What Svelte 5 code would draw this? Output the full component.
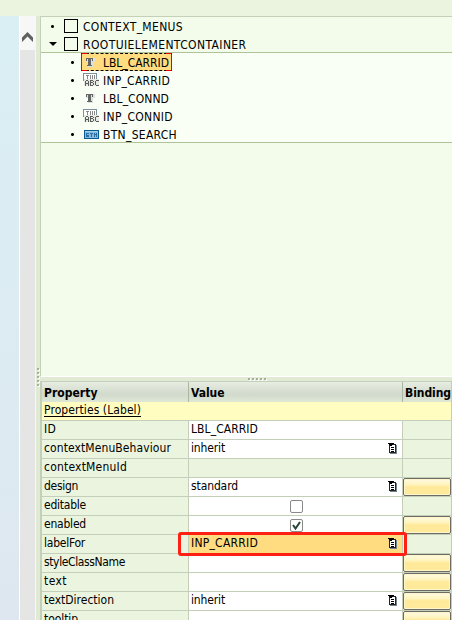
<script>
  const tree = [
    { name: 'LBL_CARRID', kind: 'label', w: 66, selected: true },
    { name: 'INP_CARRID', kind: 'input', w: 67 },
    { name: 'LBL_CONND', kind: 'label', w: 66 },
    { name: 'INP_CONNID', kind: 'input', w: 70 },
    { name: 'BTN_SEARCH', kind: 'button', w: 74 }
  ];
  const rows = [
    { name: 'ID', w: 12, value: 'LBL_CARRID', vw: 67 },
    { name: 'contextMenuBehaviour', w: 127, value: 'inherit', vw: 34, list: true },
    { name: 'contextMenuId', w: 83, disabled: true },
    { name: 'design', w: 34, value: 'standard', vw: 47, list: true, bind: true },
    { name: 'editable', w: 42, check: 'off' },
    { name: 'enabled', w: 42, check: 'on', bind: true },
    { name: 'labelFor', w: 41, value: 'INP_CARRID', vw: 67, list: true, selected: true },
    { name: 'styleClassName', w: 81, bind: true },
    { name: 'text', w: 23, bind: true },
    { name: 'textDirection', w: 70, value: 'inherit', vw: 34, list: true, bind: true },
    { name: 'tooltip', w: 34, bind: true }
  ];
  // Spreads the letters so that a label takes a set width.
  function fit(node, width) {
    const spacing = (width - node.getBoundingClientRect().width) / node.textContent.length;
    node.style.letterSpacing = `${spacing}px`;
  }
</script>

{#snippet icon(kind)}
  {#if kind === 'label'}
    <svg class="icon" width="17" height="16" viewBox="0 0 17 16" shape-rendering="crispEdges">
      <path fill="#dde2dc" d="M3 4h9v4h-2v5H5V8H3z" />
      <path fill="#666" d="M3 4h7v3H9V5H8v6h1v1H4v-1h1V5H4v2H3z" />
    </svg>
  {:else if kind === 'input'}
    <svg class="icon" width="17" height="16" viewBox="0 0 17 16" shape-rendering="crispEdges">
      <path fill="#fff" stroke="#7b8f9c" d="M.5 1.500h13v7H.5z" />
      <path fill="#888" d="M3 3h3v1H5v3H4V4H3zM7 3h1v4H7zM9 3h1v4H9zM11 3h1v4h-1z" />
      <path fill="#e6eae4" d="M1 7h15v7H1z" />
      <path fill="#5c5c5c" d="M3 8h2v1h1v5H5v-2H3v2H2V9h1zM3 9v2h2V9zM7 8h3v1h1v1h-1v1h1v2h-1v1H7zM8 9v1h2V9zM8 11v2h2v-2zM13 8h3v1h-3v4h3v1h-3v-1h-1V9h1z" />
    </svg>
  {:else}
    <svg class="icon" width="17" height="16" viewBox="0 0 17 16" shape-rendering="crispEdges">
      <path fill="#84bbdf" stroke="#075b91" d="M1.500 4.500h14v8h-14z" />
      <path fill="#a5cfe9" d="M2 5h13v1H2z" />
      <path fill="#2c6ea4" d="M3 7h3v1H4v1h2v2H3zM7 7h3v1H9v3H8V8H7zM11 7h1v1h1V7h1v4h-1V9h-1v2h-1z" />
    </svg>
  {/if}
{/snippet}

<div class="window">
  <div class="top"></div>
  <div class="main">
    <div class="canvas"></div>
    <div class="scroll">
      <svg width="15" height="34" viewBox="0 0 15 34"><path d="M2 26v-4.500l5.500-5.500 5.500 5.500V26l-5.500-5.500z" fill="#606060" /></svg>
    </div>
    <div class="splitv">{#each [0, 1, 2, 3, 4] as _}<i></i>{/each}</div>
    <div class="right">
      <div class="tree">
        <div class="node"><b class="dot"></b><span class="box"></span><span use:fit={100}>CONTEXT_MENUS</span></div>
        <div class="node root"><b class="arrow"></b><span class="box"></span><span use:fit={163.5}>ROOTUIELEMENTCONTAINER</span></div>
        <div class="children">
          {#each tree as t}
            <div class="node child">
              <b class="dot"></b>
              <div class="item" class:chosen={t.selected}>{@render icon(t.kind)}<span use:fit={t.w}>{t.name}</span></div>
            </div>
          {/each}
        </div>
      </div>
      <div class="splith">{#each [0, 1, 2, 3, 4] as _}<i></i>{/each}</div>
      <div class="table">
        <div class="head"><div class="prop"><span use:fit={53.5}>Property</span></div><div class="val"><span use:fit={33.5}>Value</span></div><div class="bind"><span use:fit={46}>Binding</span></div></div>
        <div class="group"><span use:fit={97}>Properties (Label)</span></div>
        {#each rows as r}
          <div class="row">
            <div class="prop"><span use:fit={r.w}>{r.name}</span></div>
            <div class="val" class:disabled={r.disabled} class:active={r.selected}>
              {#if r.value}<span use:fit={r.vw}>{r.value}</span>{/if}
              {#if r.check}
                <div class="check">{#if r.check === 'on'}<svg width="11" height="11" viewBox="0 0 11 11"><path d="M2 5l2.500 3.500L9 2" fill="none" stroke="#294536" stroke-width="2" /></svg>{/if}</div>
              {/if}
              {#if r.list}
                <svg class="list" width="10" height="12" viewBox="0 0 10 12" shape-rendering="crispEdges">
                  <path fill="#72858e" d="M2 2h7v9H2z" /><path fill="#222" d="M1 1h7v9H1z" /><path fill="#fff" d="M2 2h5v7H2z" />
                  <path fill="#000" d="M0 0h6v1H5v1H4v1H2V2H1V1H0zM3 4h3v1H3zM3 6h3v1H3zM3 8h3v1H3z" />
                </svg>
              {/if}
            </div>
            <div class="bind">{#if r.bind}<div class="btn"></div>{/if}</div>
          </div>
        {/each}
      </div>
    </div>
  </div>
  <div class="marker"></div>
</div>

<style>
  .window, .window * { box-sizing: border-box; }
  .window { position: relative; width: 452px; height: 620px; overflow: hidden; background: #ebf4df; color: #000; font: 12px/18px "DejaVu Sans Condensed", "DejaVu Sans", sans-serif; }
  span { white-space: nowrap; flex: none; }
  .top { height: 16px; }
  .main { display: flex; height: 604px; }
  .canvas { width: 20px; border-right: 1px solid #fff; background: linear-gradient(#daeff3, #dcecf2 50%, #dee7ef); }
  .scroll { width: 15px; background: #e5e5e5; }
  .scroll svg { display: block; background: #f7f7f7; }
  .splitv { width: 5px; border-left: 1px solid #f5f9ef; background: #e0ead5; padding: 352px 0 0 1px; display: flex; flex-direction: column; gap: 2px; }
  .splitv i, .splith i { width: 2px; height: 2px; background: #a4b097; box-shadow: 1px 1px #fff; flex: none; }
  .right { width: 412px; }
  .tree { height: 361px; border: 1px solid #c5d0b8; border-right: 0; border-bottom-color: #fff; background: #f3fbea; }
  .node { display: flex; height: 18px; align-items: center; padding-left: 10px; line-height: 18px; }
  .node span:not(.box) { padding-top: 2px; }
  .root { border-bottom: 1px solid #afc399; }
  .dot { width: 3px; height: 3px; background: radial-gradient(#000 45%, #999); margin-right: 10px; flex: none; border-radius: 1px; }
  .arrow { border: 4px solid transparent; border-top-color: #000; border-bottom: 0; width: 8px; height: 4px; margin: 0 7px 0 -2px; }
  .box { width: 14px; height: 14px; border: 1px solid #000; margin-right: 5px; }
  .children { height: 90px; background: #f9fff5; border-bottom: 1px solid #afc399; }
  .child { padding-left: 30px; }
  .child .dot { margin-right: 7px; }
  .item { display: flex; align-items: center; height: 18px; width: 91px; padding-left: 2px; }
  .item span { margin-left: 3px; }
  .icon { flex: none; }
  .chosen { position: relative; background: #ffdc80; border: 1px dashed #000; border-left: 1px solid #f00000; border-right: 1px solid #f00000; padding-left: 1px; }
  .chosen::before, .chosen::after { content: ''; position: absolute; top: -1px; bottom: -1px; width: 5px; border: solid #e00; border-width: 1px 0; }
  .chosen::before { left: 0; }
  .chosen::after { right: 0; }
  .splith { height: 4px; background: #e0ead5; display: flex; gap: 2px; padding: 1px 0 0 208px; }
  .table { width: 412px; border: solid #c3cfb8; border-width: 1px 1px 0 2px; height: 239px; overflow: hidden; }
  .head { display: flex; height: 20px; background: linear-gradient(#e7eee1, #d5dcd0 50%, #d2dacc 65%, #dfe7d7); font-weight: bold; line-height: 22px; }
  .head div { border-right: 1px solid #a9b6a0; }
  .head .bind { border: 0; }
  .head .bind span { margin-left: 2px; }
  .group { height: 19px; border-bottom: 1px solid #c3cfb8; background: #fffec0; padding-left: 2px; line-height: 17px; }
  .group span { text-decoration: underline; text-underline-offset: 2px; text-decoration-thickness: 1px; }
  .row { display: flex; height: 19px; line-height: 17px; }
  .row > div { border-bottom: 1px solid #c3cfb8; }
  .prop { width: 147px; padding-left: 2px; border-right: 1px solid #c3cfb8; }
  .val { display: flex; width: 214px; padding-left: 2px; border-right: 1px solid #c3cfb8; }
  .row .val { background: #fff; }
  .row .disabled { background: #ebf4df; }
  .row .active { background: #ffdc80; }
  .list { margin: 3px 4px 0 auto; }
  .check { width: 13px; height: 13px; border: 1px solid #898989; border-radius: 2px; background: #fff; margin: 3px 0 0 99px; }
  .check svg { display: block; }
  .bind { width: 48px; flex: none; }
  .btn { width: 48px; height: 18px; border: 1px solid #6c6c65; border-radius: 2px; background: linear-gradient(#fffbe5, #fff4bd 35%, #ffe999 50%, #ffea9d); box-shadow: inset 0 0 0 1px #fff5cc; }
  .marker { position: absolute; left: 178px; top: 532px; width: 229px; height: 24px; border: 3px solid #ff2014; border-radius: 3px; }
</style>
